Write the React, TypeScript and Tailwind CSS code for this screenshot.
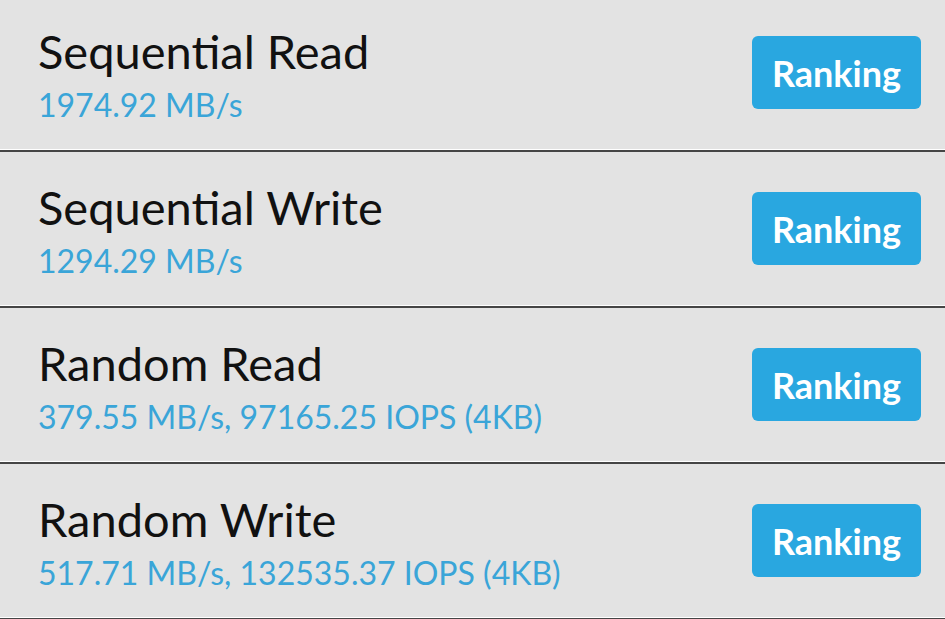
const rows = [
  { title: "Sequential Read", value: "1974.92 MB/s" },
  { title: "Sequential Write", value: "1294.29 MB/s" },
  { title: "Random Read", value: "379.55 MB/s, 97165.25 IOPS (4KB)" },
  { title: "Random Write", value: "517.71 MB/s, 132535.37 IOPS (4KB)" },
];

export default function App() {
  return (
    <div className="w-[945px] h-[619px] bg-[#e3e3e3] overflow-hidden font-['Lato',sans-serif]">
      <div className="-mt-[4px]">
        {rows.map((r) => (
          <div key={r.title} className="h-[156px] flex flex-col">
            <div className="flex-1 flex items-center justify-between pl-[38px] pr-[24px]">
              <div className="flex flex-col pt-[12px]">
                <span className="text-[47px] leading-[52px] text-[#111]">{r.title}</span>
                <span className="text-[32px] leading-[56px] text-[#3aa5d8]">{r.value}</span>
              </div>
              <button className="w-[169px] h-[73px] rounded-[6px] bg-[#29a7e0] text-white font-bold text-[36px]">
                Ranking
              </button>
            </div>
            <div className="h-px bg-white" />
            <div className="h-[2px] bg-[#454545]" />
          </div>
        ))}
      </div>
    </div>
  );
}
